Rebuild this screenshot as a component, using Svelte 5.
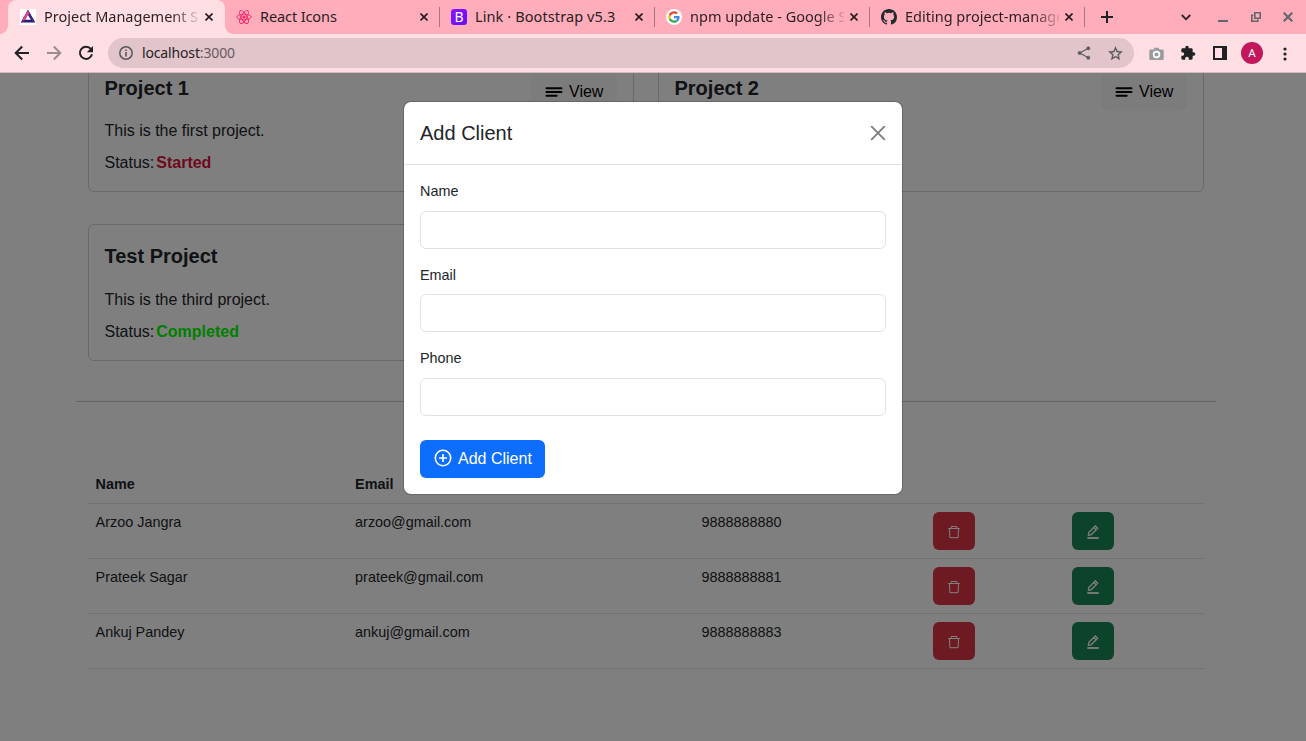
<script>
  const tabs = [
    { title: 'Project Management System', icon: 'triangle', active: true },
    { title: 'React Icons', icon: 'react' },
    { title: 'Link · Bootstrap v5.3', icon: 'bootstrap' },
    { title: 'npm update - Google Search', icon: 'google' },
    { title: 'Editing project-management', icon: 'github' }
  ];
  const projects = [
    { name: 'Project 1', text: 'This is the first project.', status: 'Started', tone: 'started' },
    { name: 'Project 2', text: '', status: '', tone: '' },
    { name: 'Test Project', text: 'This is the third project.', status: 'Completed', tone: 'completed' }
  ];
  const clients = [
    { name: 'Arzoo Jangra', email: 'arzoo@gmail.com', phone: '9888888880' },
    { name: 'Prateek Sagar', email: 'prateek@gmail.com', phone: '9888888881' },
    { name: 'Ankuj Pandey', email: 'ankuj@gmail.com', phone: '9888888883' }
  ];
  const fields = ['Name', 'Email', 'Phone'];
</script>

{#snippet favicon(name)}
  {#if name === 'triangle'}
    <svg class="fav" viewBox="0 0 16 16">
      <rect width="16" height="16" fill="#fff" />
      <path d="M8 1 15.2 13.600H.8Z" fill="#2b1a78" />
      <path d="M8 1 .8 13.600l2.800-1.300L8.600 4.600Z" fill="#6a2a98" />
      <path d="M8 1 15.200 13.600l-3.200-1.600L6.800 3.400Z" fill="#3f2391" />
      <path d="M7.600 1.700 9.300 4.300 4.300 11.600 2.300 11Z" fill="#f0437e" />
      <path d="M8 6 10.800 10.800H5.200Z" fill="#fff" />
    </svg>
  {:else if name === 'react'}
    <svg class="fav" viewBox="0 0 16 16" fill="none" stroke="#f4266b" stroke-width="0.9">
      <ellipse cx="8" cy="8" rx="7.2" ry="2.8" />
      <ellipse cx="8" cy="8" rx="7.2" ry="2.8" transform="rotate(60 8 8)" />
      <ellipse cx="8" cy="8" rx="7.2" ry="2.8" transform="rotate(120 8 8)" />
      <circle cx="8" cy="8" r="1.5" fill="#f4266b" stroke="none" />
    </svg>
  {:else if name === 'bootstrap'}
    <span class="boot">B</span>
  {:else if name === 'google'}
    <svg class="fav" viewBox="0 0 16 16">
      <circle cx="8" cy="8" r="8" fill="#fff" />
      <g transform="translate(2.2 2.2) scale(.242)">
        <path fill="#4285f4" d="M46.98 24.55c0-1.57-.15-3.09-.38-4.55H24v9.02h12.94c-.58 2.96-2.26 5.48-4.78 7.18l7.73 6c4.51-4.18 7.09-10.36 7.09-17.65z" />
        <path fill="#34a853" d="M24 48c6.48 0 11.93-2.13 15.89-5.81l-7.73-6c-2.15 1.45-4.92 2.3-8.16 2.3-6.26 0-11.57-4.22-13.47-9.91l-7.98 6.19C6.51 42.62 14.62 48 24 48z" />
        <path fill="#fbbc05" d="M10.53 28.59A14.5 14.5 0 0 1 9.77 24c0-1.6.27-3.14.76-4.59l-7.98-6.19A24 24 0 0 0 0 24c0 3.88.92 7.54 2.56 10.78z" />
        <path fill="#ea4335" d="M24 9.5c3.54 0 6.71 1.22 9.21 3.6l6.85-6.85C35.9 2.38 30.47 0 24 0 14.62 0 6.51 5.38 2.56 13.22l7.98 6.19C12.43 13.72 17.74 9.5 24 9.5z" />
      </g>
    </svg>
  {:else}
    <svg class="fav" viewBox="0 0 16 16" fill="#24292f">
      <path d="M8 0C3.58 0 0 3.58 0 8c0 3.54 2.29 6.53 5.47 7.59.4.07.55-.17.55-.38 0-.19-.01-.82-.01-1.49-2.01.37-2.53-.49-2.69-.94-.09-.23-.48-.94-.82-1.13-.28-.15-.68-.52-.01-.53.63-.01 1.08.58 1.23.82.72 1.21 1.87.87 2.33.66.07-.52.28-.87.51-1.07-1.78-.2-3.64-.89-3.64-3.95 0-.87.31-1.59.82-2.15-.08-.2-.36-1.02.08-2.12 0 0 .67-.21 2.2.82a7.6 7.6 0 0 1 4 0c1.53-1.04 2.2-.82 2.2-.82.44 1.1.16 1.92.08 2.12.51.56.82 1.27.82 2.15 0 3.07-1.87 3.75-3.65 3.95.29.25.54.73.54 1.48 0 1.07-.01 1.93-.01 2.2 0 .21.15.46.55.38A8.01 8.01 0 0 0 16 8c0-4.42-3.58-8-8-8z" />
    </svg>
  {/if}
{/snippet}

<div class="screen">
  <header class="chrome">
    <div class="tabs">
      {#each tabs as tab}
        <div class="tab {tab.icon}" class:active={tab.active}>
          {@render favicon(tab.icon)}
          <span class="tab-title">{tab.title}</span>
          <svg class="tab-close" viewBox="0 0 8 8"><path d="M.5.5 7.500 7.500M7.500.5.5 7.500" stroke="#26191c" stroke-width="1.600" /></svg>
        </div>
      {/each}
      <svg class="plus" viewBox="0 0 12 12"><path d="M6 0v12M0 6h12" stroke="#202124" stroke-width="2" /></svg>
      <div class="window-tools">
        <svg width="10" height="7" viewBox="0 0 10 7"><path d="m.8 1 4.200 4.300L9.200 1" fill="none" stroke="#2b2024" stroke-width="1.800" /></svg>
        <svg width="10" height="10" viewBox="0 0 10 10"><path d="M0 9h10" stroke="#626669" stroke-width="2" /></svg>
        <svg width="10" height="10" viewBox="0 0 10 10" fill="none" stroke="#626669" stroke-width="1.600"><path d="M3.800.8h5.400v5.400H3.800zM2.400 3.200H.8v6h6V7.600" /></svg>
        <svg width="10" height="10" viewBox="0 0 10 10"><path d="m.7.7 8.600 8.600M9.300.7.7 9.300" stroke="#626669" stroke-width="2" /></svg>
      </div>
    </div>

    <div class="toolbar">
      <svg class="nav" viewBox="0 0 16 16" fill="none" stroke="#202124" stroke-width="2"><path d="M15 8H2M8.200 1.500 1.700 8l6.500 6.500" /></svg>
      <svg class="nav" viewBox="0 0 16 16" fill="none" stroke="#9b8c90" stroke-width="2"><path d="M1 8h13M7.800 1.500 14.300 8l-6.500 6.500" /></svg>
      <svg class="nav" viewBox="0 0 16 16"><path d="M13 4.200A6.100 6.100 0 1 0 14 9.300" fill="none" stroke="#202124" stroke-width="2" /><path d="M15 1v6.200H8.800Z" fill="#202124" /></svg>
      <div class="address">
        <svg class="info" viewBox="0 0 14 14"><circle cx="7" cy="7" r="6.200" fill="none" stroke="#58565a" stroke-width="1.500" /><path d="M7 6v4.400M7 3.400V5" stroke="#58565a" stroke-width="1.600" /></svg>
        <span class="url">localhost<em>:3000</em></span>
        <svg class="share" viewBox="0 0 14 14" fill="#5f6064" stroke="#5f6064"><path d="M11.300 2.300 2.800 7l8.500 4.700" fill="none" stroke-width="1.300" /><circle cx="11.300" cy="2.300" r="1.500" /><circle cx="2.600" cy="7" r="1.500" /><circle cx="11.300" cy="11.700" r="1.500" /></svg>
        <svg class="star" viewBox="0 0 24 24" fill="#5a5a5e" stroke="#5a5a5e" stroke-width=".4"><path d="m22 9.240-7.190-.62L12 2 9.190 8.630 2 9.240l5.460 4.730L5.820 21 12 17.270 18.180 21l-1.630-7.030zM12 15.400l-3.760 2.270 1-4.280-3.320-2.880 4.380-.38L12 6.100l1.710 4.040 4.380.38-3.320 2.880 1 4.280z" /></svg>
      </div>
      <svg class="camera" viewBox="0 0 15 14"><path d="M1.500 2.500h3L5.500.7h4l1 1.800h3q1.200 0 1.200 1.200v8q0 1.200-1.200 1.200h-12Q.3 12.900 .3 11.700v-8Q.3 2.500 1.500 2.500Z" fill="#999b9c" /><circle cx="7.500" cy="7.500" r="2.900" fill="none" stroke="#fff" stroke-width="1.700" /></svg>
      <svg class="puzzle" viewBox="0 0 24 24" fill="#202124"><path d="M20.500 11H19V7c0-1.100-.9-2-2-2h-4V3.500a2.500 2.500 0 0 0-5 0V5H4c-1.100 0-1.990.9-1.990 2v3.800H3.500c1.490 0 2.700 1.210 2.700 2.700s-1.210 2.700-2.700 2.700H2V20c0 1.100.9 2 2 2h3.800v-1.500c0-1.490 1.210-2.700 2.700-2.700s2.700 1.210 2.700 2.700V22H17c1.100 0 2-.9 2-2v-4h1.500a2.500 2.500 0 0 0 0-5z" /></svg>
      <svg class="panel" viewBox="0 0 14 14"><path d="M1 1h12v12H1z" fill="none" stroke="#202124" stroke-width="2" /><path d="M9 0h5v14H9z" fill="#202124" /></svg>
      <span class="avatar">A</span>
      <svg class="dots" viewBox="0 0 4 14" fill="#202124"><circle cx="2" cy="2" r="1.600" /><circle cx="2" cy="7" r="1.600" /><circle cx="2" cy="12" r="1.600" /></svg>
    </div>
  </header>

  <main class="viewport">
    <div class="page">
      <section class="cards">
        {#each projects as project}
          <article class="card">
            <div class="card-head">
              <h5>{project.name}</h5>
              <button class="btn view">
                <svg width="18" height="10" viewBox="0 0 18 10" stroke="#000" stroke-width="2" stroke-linecap="round"><path d="M1.500 1.200h15M1.500 5h15M1.500 8.800h10.200" /></svg>
                View
              </button>
            </div>
            <p>{project.text}</p>
            <p>{#if project.status}Status: <strong class={project.tone}>{project.status}</strong>{/if}</p>
          </article>
        {/each}
      </section>

      <hr />

      <table>
        <colgroup><col style="width: 259.500px" /><col style="width: 346.500px" /><col style="width: 231px" /><col style="width: 139px" /><col /></colgroup>
        <thead>
          <tr><th>Name</th><th>Email</th><th>Phone</th><th></th><th></th></tr>
        </thead>
        <tbody>
          {#each clients as client}
            <tr>
              <td>{client.name}</td>
              <td>{client.email}</td>
              <td>{client.phone}</td>
              <td>
                <button class="btn icon danger" aria-label="Delete">
                  <svg width="14" height="14" viewBox="0 0 14 14" fill="none" stroke="#fff"><path d="M1.200 3.500h11.600M4.200 3.300V1.500h5.600v1.800M2.500 3.700l.4 9h8.200l.4-9" /></svg>
                </button>
              </td>
              <td>
                <button class="btn icon success" aria-label="Edit">
                  <svg width="14" height="14" viewBox="0 0 14 14" fill="none" stroke="#fff" stroke-width="1.300"><path d="M2.400 10.300 2.700 7.500 9.300 1l2.400 2.300-6.600 6.500ZM8 2.600l2.200 2.200" /><path d="M1.300 13h11.400" stroke-width="1.800" /></svg>
                </button>
              </td>
            </tr>
          {/each}
        </tbody>
      </table>
    </div>
    <div class="backdrop"></div>
    <div class="modal" role="dialog" aria-label="Add Client">
      <div class="modal-head">
        <h5>Add Client</h5>
        <svg width="16" height="16" viewBox="0 0 16 16"><path d="m1.700 1.700 12.600 12.600M14.300 1.700 1.700 14.300" stroke="#7f7f7f" stroke-width="1.900" stroke-linecap="round" /></svg>
      </div>
      <form class="modal-body">
        {#each fields as field}
          <label>{field}<input type="text" /></label>
        {/each}
        <button type="button" class="btn add">
          <svg width="18" height="18" viewBox="0 0 18 18" fill="none" stroke="#fff" stroke-width="1.600"><circle cx="9" cy="9" r="7.700" /><path d="M9 5v8M5 9h8" /></svg>
          Add Client
        </button>
      </form>
    </div>
  </main>
</div>

<style>
  :global(body) { margin: 0; overflow: hidden; }
  .screen, .screen * { box-sizing: border-box; }
  .screen {
    width: 1306px; height: 741px; overflow: hidden;
    display: flex; flex-direction: column;
    font: 16px/1.5 'Liberation Sans', Arial, sans-serif; color: #212529;
  }
  svg { display: block; flex: none; }

  .chrome { height: 73px; flex: none; background: #ffdee4; border-bottom: 1px solid #d5b7bd; font-family: 'Noto Sans', sans-serif; }
  .tabs { height: 34px; display: flex; align-items: center; background: #ffacbb; padding-left: 8px; }
  .tab { width: 215px; height: 34px; flex: none; display: flex; align-items: center; padding: 0 10px 0 11px; position: relative; }
  .tab.active { width: 217px; padding-left: 12px; padding-right: 10px; background: #ffdee4; border-radius: 8px 8px 0 0; }
  .tab.active::before, .tab.active::after { content: ''; position: absolute; bottom: 0; width: 8px; height: 8px; }
  .tab.active::before { left: -8px; background: radial-gradient(circle at 0 0, transparent 7.500px, #ffdee4 8px); }
  .tab.active::after { right: -8px; background: radial-gradient(circle at 100% 0, transparent 7.500px, #ffdee4 8px); }
  .tab:not(.active)::after { content: ''; position: absolute; right: 0; top: 7px; width: 1px; height: 20px; background: #a87680; }
  .fav { width: 16px; height: 16px; }
  .boot { width: 16px; height: 16px; border-radius: 3px; background: linear-gradient(135deg, #9013fa, #6610f2); color: #fff; font: 14px/16px 'Noto Sans', sans-serif; text-align: center; flex: none; }
  .tab-title { width: 154px; margin: 0 0 2px 8px; overflow: hidden; white-space: nowrap; font-size: 14.500px; line-height: 24px; color: #2a1f22; mask-image: linear-gradient(90deg, #000 128px, transparent 158px); }
  .react .tab-title, .bootstrap .tab-title { mask-image: none; }
  .react .tab-title { letter-spacing: -0.1px; }
  .bootstrap .tab-title { letter-spacing: 0.1px; }
  .tab-close { width: 8px; height: 8px; margin-left: auto; margin-right: 2px; }
  .plus { width: 12px; height: 12px; margin-left: 16px; }
  .window-tools { margin-left: auto; margin-right: 13px; display: flex; align-items: center; gap: 22.500px; }
  .window-tools svg:first-child { margin-right: 5px; }

  .toolbar { height: 38px; display: flex; align-items: center; padding-left: 14px; }
  .nav { width: 16px; height: 16px; margin-right: 16px; }
  .address { width: 1026px; height: 30px; margin-left: -2px; border-radius: 15px; background: #e1c5ca; display: flex; align-items: center; padding: 0 10px 0 11px; }
  .info { width: 14px; height: 14px; }
  .url { margin: 0 0 2px 9px; font-size: 14px; letter-spacing: -0.15px; color: #2a2225; }
  .url em { font-style: normal; color: #6a595e; }
  .share { width: 14px; height: 14px; margin-left: auto; }
  .star { width: 17px; height: 17px; margin-left: 16px; }
  .camera { width: 15px; height: 14px; margin: 1px 0 0 15px; }
  .puzzle { width: 16px; height: 16px; margin-left: 16px; }
  .panel { width: 14px; height: 14px; margin-left: 17px; }
  .avatar { width: 22px; height: 22px; margin-left: 14px; border-radius: 50%; background: #c2185b; color: #fff; font: 11.500px/23px Roboto, sans-serif; text-align: center; }
  .dots { width: 4px; height: 14px; margin: 1px 0 0 19.500px; }

  .viewport { flex: 1; position: relative; overflow: hidden; background: #fff; }
  .page { width: 1140px; margin: -17.400px 0 0 76px; }
  .cards { padding: 0 12px; display: grid; grid-template-columns: 546px 546px; gap: 32px 24px; }
  .card { height: 136.500px; border: 1px solid rgba(0, 0, 0, 0.175); border-radius: 6px; padding: 16px 16px 0 15.500px; }
  .card-head { height: 38px; display: flex; align-items: center; justify-content: space-between; margin-bottom: 8.500px; }
  h5 { margin: 0; font-size: 20px; line-height: 30px; font-weight: 500; }
  .card h5 { font-weight: 700; align-self: flex-start; }
  p { margin: 0 0 8px; height: 24px; }
  .started { color: crimson; margin-left: -2.500px; }
  .completed { color: #00ff00; margin-left: -2.500px; }
  .btn { height: 38px; border: 0; border-radius: 6px; display: flex; align-items: center; font: inherit; }
  .view { width: 86px; padding: 0 0 0 14px; gap: 6px; background: #f8f9fa; color: #000; }
  hr { margin: 40.200px 0 0; border: 0; border-top: 1px solid #c8c9ca; }
  table { width: 1116px; margin: 64px 12px 0; table-layout: fixed; border-collapse: collapse; font-size: 14.400px; line-height: 21.600px; text-align: left; }
  th, td { padding: 8px 8px 8px 7.600px; border-bottom: 1px solid #dee2e6; vertical-align: top; }
  td { height: 55px; }
  .icon { width: 42px; justify-content: center; padding: 2px 0 0; }
  .danger { background: #dc3545; }
  .success { background: #198754; }

  .backdrop { position: absolute; inset: 0; background: rgba(0, 0, 0, 0.5); }
  .modal { position: absolute; left: 403px; top: 28px; width: 500px; background: #fff; background-clip: padding-box; border: 1px solid rgba(0, 0, 0, 0.175); border-radius: 8px; }
  .modal-head { height: 63px; padding: 16px; display: flex; align-items: center; justify-content: space-between; border-bottom: 1px solid #dee2e6; }
  .modal-body { padding: 16px; }
  label { display: block; margin-bottom: 16px; font-size: 14.400px; line-height: 21.600px; }
  input { display: block; width: 100%; height: 38px; margin-top: 8px; border: 1px solid #dee2e6; border-radius: 6px; background: #fff; }
  .add { width: 125px; margin-top: 24px; padding: 0 0 0 14px; gap: 6px; background: #0d6efd; color: #fff; }
  .add svg { margin-bottom: 2px; }
</style>
